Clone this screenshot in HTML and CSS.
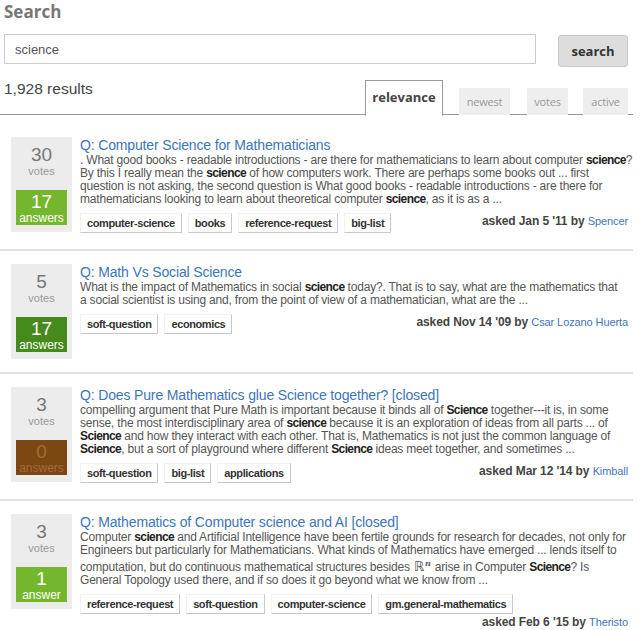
FILE: index.html
```html
<!DOCTYPE html>
<html lang="en">
  <head>
    <meta charset="UTF-8" />
    <title>Search - science</title>
    <link rel="stylesheet" href="styles.css">
  </head>
  <body>
    <div class="page">
      <h1 class="title">Search</h1>

      <form class="search-bar" onsubmit="return false">
        <input class="search-input" type="text" value="science" />
        <button class="search-btn" type="submit">search</button>
      </form>

      <div class="results-head">
        <div class="count">1,928 results</div>
        <div class="tabs">
          <a class="tab tab-active">relevance</a>
          <a class="tab tab-newest">newest</a>
          <a class="tab tab-votes">votes</a>
          <a class="tab tab-recent">active</a>
        </div>
      </div>

      <div class="results">
        <div class="result">
          <div class="stats">
            <div class="vote-count">30</div>
            <div class="vote-label">votes</div>
            <div class="answers answered">
              <div class="answer-count">17</div>
              <div class="answer-label">answers</div>
            </div>
          </div>
          <div class="summary">
            <a class="question">Q: Computer Science for Mathematicians</a>
            <div class="excerpt">
              . What good books - readable introductions - are there for mathematicians to learn about computer <b>science</b>?<br>
              By this I really mean the <b>science</b> of how computers work. There are perhaps some books out ... first<br>
              question is not asking, the second question is What good books - readable introductions - are there for<br>
              mathematicians looking to learn about theoretical computer <b>science</b>, as it is as a ...
            </div>
            <div class="meta">
              <div class="tags">
                <span class="tag">computer-science</span>
                <span class="tag">books</span>
                <span class="tag">reference-request</span>
                <span class="tag">big-list</span>
              </div>
              <div class="asked">asked Jan 5 '11 by <a class="user">Spencer</a></div>
            </div>
          </div>
        </div>

        <div class="result">
          <div class="stats">
            <div class="vote-count">5</div>
            <div class="vote-label">votes</div>
            <div class="answers accepted">
              <div class="answer-count">17</div>
              <div class="answer-label">answers</div>
            </div>
          </div>
          <div class="summary">
            <a class="question">Q: Math Vs Social Science</a>
            <div class="excerpt">
              What is the impact of Mathematics in social <b>science</b> today?. That is to say, what are the mathematics that<br>
              a social scientist is using and, from the point of view of a mathematician, what are the ...
            </div>
            <div class="meta">
              <div class="tags">
                <span class="tag">soft-question</span>
                <span class="tag">economics</span>
              </div>
              <div class="asked">asked Nov 14 '09 by <a class="user">Csar Lozano Huerta</a></div>
            </div>
          </div>
        </div>

        <div class="result">
          <div class="stats">
            <div class="vote-count">3</div>
            <div class="vote-label">votes</div>
            <div class="answers unanswered">
              <div class="answer-count">0</div>
              <div class="answer-label">answers</div>
            </div>
          </div>
          <div class="summary">
            <a class="question">Q: Does Pure Mathematics glue Science together? [closed]</a>
            <div class="excerpt">
              compelling argument that Pure Math is important because it binds all of <b>Science</b> together---it is, in some<br>
              sense, the most interdisciplinary area of <b>science</b> because it is an exploration of ideas from all parts ... of<br>
              <b>Science</b> and how they interact with each other. That is, Mathematics is not just the common language of<br>
              <b>Science</b>, but a sort of playground where different <b>Science</b> ideas meet together, and sometimes ...
            </div>
            <div class="meta">
              <div class="tags">
                <span class="tag">soft-question</span>
                <span class="tag">big-list</span>
                <span class="tag">applications</span>
              </div>
              <div class="asked">asked Mar 12 '14 by <a class="user">Kimball</a></div>
            </div>
          </div>
        </div>

        <div class="result">
          <div class="stats">
            <div class="vote-count">3</div>
            <div class="vote-label">votes</div>
            <div class="answers answered">
              <div class="answer-count">1</div>
              <div class="answer-label">answer</div>
            </div>
          </div>
          <div class="summary">
            <a class="question">Q: Mathematics of Computer science and AI [closed]</a>
            <div class="excerpt">
              Computer <b>science</b> and Artificial Intelligence have been fertile grounds for research for decades, not only for<br>
              Engineers but particularly for Mathematicians. What kinds of Mathematics have emerged ... lends itself to<br>
              computation, but do continuous mathematical structures besides <span class="math">&#8477;<sup>n</sup></span> arise in Computer <b>Science</b>? Is<br>
              General Topology used there, and if so does it go beyond what we know from ...
            </div>
            <div class="meta">
              <div class="tags">
                <span class="tag">reference-request</span>
                <span class="tag">soft-question</span>
                <span class="tag">computer-science</span>
                <span class="tag">gm.general-mathematics</span>
              </div>
              <div class="asked">asked Feb 6 '15 by <a class="user">Theristo</a></div>
            </div>
          </div>
        </div>
      </div>
    </div>
  </body>
</html>
```

FILE: styles.css
```css
* {
  margin: 0;
  padding: 0;
  box-sizing: border-box;
}

body {
  font-family: "Liberation Sans", Arial, sans-serif;
  background: #fff;
  color: #444;
}

.page {
  width: 633px;
}

.title {
  font-family: "Open Sans", sans-serif;
  font-size: 17px;
  font-weight: 700;
  color: #777;
  line-height: 24px;
  padding: 0 0 0 4px;
}

.search-bar {
  display: flex;
  align-items: flex-start;
  gap: 22px;
  padding: 10px 5px 0 4px;
}

.search-input {
  width: 532px;
  height: 30px;
  border: 1px solid #ccc;
  padding: 0 10px;
  font-family: "Liberation Sans", Arial, sans-serif;
  font-size: 13px;
  color: #555;
  outline: none;
}

.search-btn {
  margin-top: 1px;
  width: 70px;
  height: 32px;
  background: #ddd;
  border: 1px solid #c8c8c8;
  border-radius: 3px;
  font-family: "Open Sans", sans-serif;
  font-size: 13px;
  font-weight: 700;
  color: #333;
  cursor: pointer;
}

/* count + sort tabs */
.results-head {
  display: flex;
  justify-content: space-between;
  align-items: flex-start;
  margin-top: 12px;
  padding: 0 5px 0 4px;
  border-bottom: 1px solid #999;
  height: 36px;
}

.count {
  font-size: 15.5px;
  color: #444;
  line-height: 20px;
}

.tabs {
  display: flex;
  align-items: flex-end;
  height: 36px;
}

.tab {
  font-family: "Open Sans", sans-serif;
  font-size: 11px;
  color: #999;
  background: #eee;
  height: 27px;
  line-height: 28px;
  text-align: center;
  letter-spacing: -0.2px;
  cursor: pointer;
}

.tab-active {
  width: 78px;
  height: 36px;
  line-height: 33px;
  margin-bottom: -1px;
  background: #fff;
  border: 1px solid #999;
  border-bottom: none;
  font-size: 13px;
  font-weight: 700;
  color: #444;
  letter-spacing: 0;
}

.tab-newest {
  width: 51px;
  margin-left: 16px;
}

.tab-votes {
  width: 41px;
  margin-left: 17px;
}

.tab-recent {
  width: 45px;
  margin-left: 15px;
}

/* result rows */
.results {
  margin-top: 9px;
}

.result {
  display: flex;
  align-items: flex-start;
  padding: 13px 5px 13px 11px;
  border-bottom: 2px solid #e3e3e3;
}

.result:last-child {
  border-bottom: none;
}

.stats {
  width: 61px;
  height: 95px;
  flex-shrink: 0;
  background: #ececec;
  padding: 8px 5px 6px;
  text-align: center;
}

.vote-count {
  font-size: 19px;
  line-height: 20px;
  color: #777;
}

.vote-label {
  font-size: 11px;
  line-height: 12px;
  color: #999;
}

.answers {
  margin-top: 13px;
  height: 35px;
  padding-top: 2px;
  color: #fff;
}

.answers.answered {
  background: #75b72c;
}

.answers.accepted {
  background: #458a1a;
}

.answers.unanswered {
  background: #7d4713;
  color: #a36b3c;
}

.answer-count {
  font-size: 19px;
  line-height: 20px;
}

.answer-label {
  font-size: 12px;
  line-height: 13px;
}

.summary {
  flex: 1;
  min-width: 0;
  margin-left: 8px;
  padding-bottom: 3px;
}

.question {
  display: block;
  font-size: 14px;
  line-height: 16px;
  letter-spacing: -0.15px;
  color: #3d75ba;
  cursor: pointer;
}

.excerpt {
  margin-top: 1px;
  font-size: 12px;
  line-height: 13px;
  letter-spacing: -0.2px;
  white-space: nowrap;
  color: #555;
}

.excerpt b {
  color: #222;
  letter-spacing: -0.6px;
}

.math {
  font-family: "DejaVu Sans", sans-serif;
  font-size: 13px;
  margin: 0 1px;
}

.math sup {
  font-family: "DejaVu Serif", serif;
  font-style: italic;
  font-weight: 700;
  font-size: 8px;
  margin-left: 1px;
}

.meta {
  display: flex;
  flex-wrap: wrap;
  align-items: flex-start;
  margin-top: 7px;
}

.tags {
  display: flex;
  gap: 6px;
}

.tag {
  height: 20px;
  line-height: 18px;
  padding: 0 6px;
  border: 1px solid;
  border-color: #f2f2f2 #c8c8c8 #c8c8c8 #f2f2f2;
  font-size: 11px;
  font-weight: 700;
  letter-spacing: -0.4px;
  color: #333;
}

.asked {
  margin-left: auto;
  padding-top: 1px;
  font-size: 12px;
  line-height: 14px;
  font-weight: 700;
  letter-spacing: -0.1px;
  color: #444;
  white-space: nowrap;
}

.user {
  font-weight: 400;
  font-size: 11px;
  color: #3d75ba;
  cursor: pointer;
}
```
